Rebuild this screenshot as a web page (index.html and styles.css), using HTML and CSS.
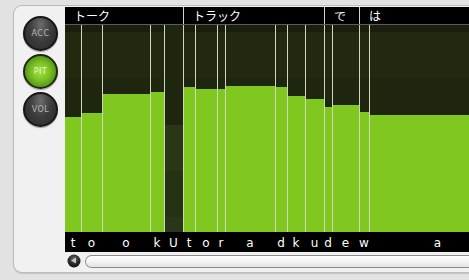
FILE: index.html
```html
<!DOCTYPE html>
<html>
<head>
<meta charset="utf-8">
<link rel="stylesheet" href="styles.css">
</head>
<body>
<div class="panel">
  <div class="buttons">
    <div class="btn">ACC</div>
    <div class="btn on">PIT</div>
    <div class="btn">VOL</div>
  </div>
  <div class="chart">
    <div class="header">
      <div class="seg" style="width:118px">トーク</div>
      <div class="seg div" style="width:141px">トラック</div>
      <div class="seg div" style="width:35px">で</div>
      <div class="seg div" style="width:147px">は</div>
    </div>
    <div class="bars">
      <div class="col first" style="width:16px"><div class="fill" style="height:115px"></div></div>
      <div class="col" style="width:21px"><div class="fill" style="height:119px"></div></div>
      <div class="col" style="width:48px"><div class="fill" style="height:138px"></div></div>
      <div class="col" style="width:14px"><div class="fill" style="height:140px"></div></div>
      <div class="col unvoiced" style="width:19px"></div>
      <div class="col" style="width:12px"><div class="fill" style="height:145px"></div></div>
      <div class="col" style="width:22px"><div class="fill" style="height:143px"></div></div>
      <div class="col" style="width:8px"><div class="fill" style="height:143px"></div></div>
      <div class="col" style="width:50px"><div class="fill" style="height:146px"></div></div>
      <div class="col" style="width:12px"><div class="fill" style="height:145px"></div></div>
      <div class="col" style="width:18px"><div class="fill" style="height:136px"></div></div>
      <div class="col" style="width:19px"><div class="fill" style="height:133px"></div></div>
      <div class="col" style="width:8px"><div class="fill" style="height:125px"></div></div>
      <div class="col" style="width:27px"><div class="fill" style="height:127px"></div></div>
      <div class="col" style="width:10px"><div class="fill" style="height:120px"></div></div>
      <div class="col" style="width:137px"><div class="fill" style="height:117px"></div></div>
    </div>
    <div class="labels">
      <div class="lab" style="width:16px">t</div>
      <div class="lab" style="width:21px">o</div>
      <div class="lab" style="width:48px">o</div>
      <div class="lab" style="width:14px">k</div>
      <div class="lab" style="width:19px">U</div>
      <div class="lab" style="width:12px">t</div>
      <div class="lab" style="width:22px">o</div>
      <div class="lab" style="width:8px">r</div>
      <div class="lab" style="width:50px">a</div>
      <div class="lab" style="width:12px">d</div>
      <div class="lab" style="width:18px">k</div>
      <div class="lab" style="width:19px">u</div>
      <div class="lab" style="width:8px">d</div>
      <div class="lab" style="width:27px">e</div>
      <div class="lab" style="width:10px">w</div>
      <div class="lab" style="width:137px">a</div>
    </div>
    <div class="scroll">
      <svg class="knob" width="14" height="14" viewBox="0 0 14 14">
        <defs>
          <radialGradient id="kg" cx="50%" cy="35%" r="65%">
            <stop offset="0" stop-color="#6a6a6a"/>
            <stop offset="0.6" stop-color="#2a2a2a"/>
            <stop offset="1" stop-color="#111"/>
          </radialGradient>
        </defs>
        <circle cx="7" cy="7" r="6.5" fill="url(#kg)"/>
        <path d="M4 6.5 L9 3.5 L9 9.5 Z" fill="#c8c8c8"/>
      </svg>
      <div class="track"></div>
    </div>
  </div>
</div>
</body>
</html>
```
FILE: styles.css
```css
html, body {
  margin: 0;
  padding: 0;
}
body {
  width: 469px;
  height: 280px;
  overflow: hidden;
  background: #e2e2e2;
  font-family: "DejaVu Sans", sans-serif;
}
.panel {
  box-sizing: border-box;
  margin: 5px 0 0 13px;
  width: 540px;
  height: 268px;
  border: 1px solid #bcbcbc;
  border-radius: 9px;
  background: #f1f1f1;
  box-shadow: 0 1px 1px #c4c4c4;
  display: flex;
  gap: 7px;
  padding: 1px 0 0 9px;
}
.buttons {
  display: flex;
  flex-direction: column;
  gap: 3px;
  padding-top: 9px;
}
.btn {
  box-sizing: border-box;
  width: 35px;
  height: 35px;
  border-radius: 50%;
  border: 2px solid #161616;
  background: radial-gradient(ellipse at 50% 22%, #6c6c6c 0%, #3e3e3e 45%, #262626 100%);
  box-shadow: 0 1px 1px rgba(0,0,0,0.35);
  color: #b4b4b4;
  font-size: 8px;
  letter-spacing: 0.5px;
  display: flex;
  align-items: center;
  justify-content: center;
}
.btn.on {
  border-color: #1e2a12;
  background: radial-gradient(circle at 50% 50%, #a4e048 0%, #7cc424 40%, #4e8a16 80%, #2e5210 100%);
  color: #e6f6cc;
}
.chart {
  display: flex;
  flex-direction: column;
  width: 441px;
}
.header {
  display: flex;
  height: 17px;
  background: #000;
  border-bottom: 1px solid #5c5c5c;
}
.seg {
  box-sizing: border-box;
  color: #fff;
  font-family: "Noto Sans CJK JP", sans-serif;
  font-size: 12px;
  line-height: 17px;
  padding-left: 9px;
  white-space: nowrap;
}
.seg.div {
  border-left: 1px solid #cfd6c4;
}
.bars {
  display: flex;
  height: 207px;
  background: linear-gradient(to bottom,
    #1a1f0d 0px, #1a1f0d 7px,
    #212911 7px, #212911 53px,
    #1f2610 53px, #1f2610 100px,
    #1d240e 100px, #1d240e 146px,
    #1f2610 146px, #1f2610 192px,
    #1c230e 192px);
}
.col {
  box-sizing: border-box;
  height: 100%;
  display: flex;
  align-items: flex-end;
  border-left: 1px solid #cdd8b8;
}
.col.first {
  border-left: none;
}
.col.unvoiced {
  background: linear-gradient(to bottom,
    #1f2610 0px, #1f2610 100px,
    #2a3616 100px, #2a3616 146px,
    #263214 146px, #263214 192px,
    #2a3618 192px);
}
.fill {
  width: 100%;
  background: #80c820;
}
.labels {
  display: flex;
  height: 20px;
  background: #000;
}
.lab {
  box-sizing: border-box;
  color: #fff;
  font-size: 12px;
  line-height: 20px;
  padding-top: 1px;
  text-align: center;
}
.scroll {
  display: flex;
  align-items: center;
  height: 18px;
  gap: 4px;
  padding-left: 2px;
}
.knob {
  display: block;
  flex: none;
}
.track {
  flex: 1;
  height: 13px;
  box-sizing: border-box;
  border: 1px solid #8c8c8c;
  border-right: none;
  border-radius: 7px 0 0 7px;
  background: linear-gradient(to bottom, #ffffff 0%, #f4f4f4 50%, #e4e4e4 100%);
}
```
